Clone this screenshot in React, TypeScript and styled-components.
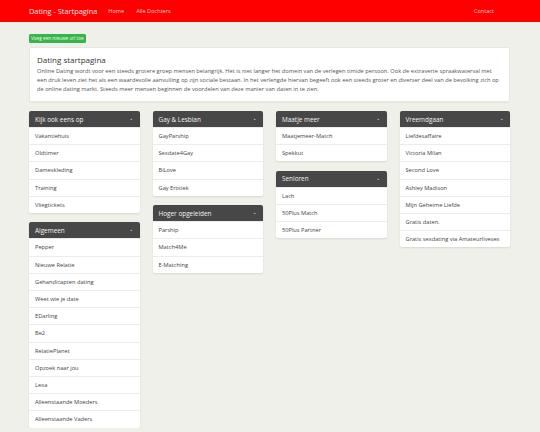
import styled, { createGlobalStyle } from "styled-components";

const GlobalStyle = createGlobalStyle`
  html, body {
    margin: 0;
    padding: 0;
    background: #f0f0eb;
    font-family: "Open Sans", "Noto Sans", sans-serif;
    color: #333;
  }
`;

type Panel = { title: string; items: string[] };

const columns: Panel[][] = [
  [
    {
      title: "Kijk ook eens op",
      items: ["Vakantiehuis", "Oldtimer", "Dameskleding", "Training", "Vliegtickets"],
    },
    {
      title: "Algemeen",
      items: [
        "Pepper",
        "Nieuwe Relatie",
        "Gehandicapten dating",
        "Weet wie je date",
        "EDarling",
        "Be2",
        "RelatiePlanet",
        "Opzoek naar jou",
        "Lexa",
        "Alleenstaande Moeders",
        "Alleenstaande Vaders",
      ],
    },
  ],
  [
    {
      title: "Gay & Lesbian",
      items: ["GayParship", "Sexdate4Gay", "BiLove", "Gay Erotiek"],
    },
    {
      title: "Hoger opgeleiden",
      items: ["Parship", "Match4Me", "E-Matching"],
    },
  ],
  [
    { title: "Maatje meer", items: ["Maatjemeer-Match", "Spekkut"] },
    { title: "Senioren", items: ["Lach", "50Plus Match", "50Plus Partner"] },
  ],
  [
    {
      title: "Vreemdgaan",
      items: [
        "Liefdesaffaire",
        "Victoria Milan",
        "Second Love",
        "Ashley Madison",
        "Mijn Geheime Liefde",
        "Gratis daten.",
        "Gratis sexdating via Amateurlivesex",
      ],
    },
  ],
];

export default function App() {
  return (
    <>
      <GlobalStyle />
      <Navbar>
        <Brand>Dating - Startpagina</Brand>
        <NavLink>Home</NavLink>
        <NavLink>Alle Dochters</NavLink>
        <NavSpacer />
        <NavLink $last>Contact</NavLink>
      </Navbar>
      <Container>
        <AddButton>Voeg een nieuwe url toe</AddButton>
        <Well>
          <WellTitle>Dating startpagina</WellTitle>
          <WellText>
            Online Dating wordt voor een steeds grotere groep mensen belangrijk. Het is niet langer het
            domein van de verlegen timide persoon. Ook de extraverte spraakwaterval met een druk leven
            ziet het als een waardevolle aanvulling op zijn sociale bestaan. In het verlengde hiervan
            begeeft ook een steeds groter en diverser deel van de bevolking zich op de online dating
            markt. Steeds meer mensen beginnen de voordelen van deze manier van daten in te zien.
          </WellText>
        </Well>
        <Grid>
          {columns.map((col, i) => (
            <Column key={i}>
              {col.map((panel) => (
                <PanelBox key={panel.title}>
                  <PanelHeader>
                    <span>{panel.title}</span>
                    <Caret>▲</Caret>
                  </PanelHeader>
                  {panel.items.map((item) => (
                    <Item key={item}>{item}</Item>
                  ))}
                </PanelBox>
              ))}
            </Column>
          ))}
        </Grid>
      </Container>
    </>
  );
}

const Navbar = styled.nav`
  display: flex;
  align-items: center;
  height: 22px;
  background: #ff0000;
  padding-left: 29px;
  box-sizing: border-box;
`;

const Brand = styled.span`
  color: #fbe4e4;
  font-size: 7.4px;
  margin-right: 11px;
`;

const NavLink = styled.span<{ $last?: boolean }>`
  color: #fbd2d2;
  font-size: 5.6px;
  margin-right: ${(p) => (p.$last ? "46px" : "12px")};
`;

const NavSpacer = styled.div`
  flex: 1;
`;

const Container = styled.div`
  width: 481px;
  margin-left: 29px;
  padding-top: 12px;
`;

const AddButton = styled.div`
  width: fit-content;
  background: #38b44a;
  color: #eafbe9;
  font-size: 4.7px;
  line-height: 9px;
  padding: 0 2px;
  border-radius: 1.5px;
`;

const Well = styled.div`
  margin-top: 4px;
  background: #fff;
  border: 1px solid #e6e6e2;
  border-radius: 2px;
  padding: 6px 7px 7px;
  box-shadow: 0 1px 1px rgba(0, 0, 0, 0.04);
`;

const WellTitle = styled.div`
  font-size: 8px;
  line-height: 11px;
  color: #333;
  margin-bottom: 2px;
`;

const WellText = styled.p`
  margin: 0;
  font-size: 5.7px;
  line-height: 9px;
  color: #555;
`;

const Grid = styled.div`
  display: grid;
  grid-template-columns: repeat(4, 1fr);
  column-gap: 13px;
  margin-top: 9px;
`;

const Column = styled.div`
  display: flex;
  flex-direction: column;
  gap: 9.5px;
`;

const PanelBox = styled.div`
  background: #fff;
  box-shadow: 0 1px 2px rgba(0, 0, 0, 0.1);
  border-radius: 2px;
  overflow: hidden;
`;

const PanelHeader = styled.div`
  display: flex;
  align-items: center;
  justify-content: space-between;
  height: 16px;
  background: #474747;
  color: #f4f4f4;
  font-size: 6.4px;
  padding: 0 7px 0 6px;
`;

const Caret = styled.span`
  font-size: 2.5px;
  color: #ddd;
`;

const Item = styled.div`
  height: 17.2px;
  line-height: 17px;
  padding-left: 6px;
  font-size: 5.7px;
  color: #444;
  border-top: 1px solid #ececec;
  box-sizing: border-box;
  white-space: nowrap;

  &:first-of-type {
    border-top: none;
  }
`;
